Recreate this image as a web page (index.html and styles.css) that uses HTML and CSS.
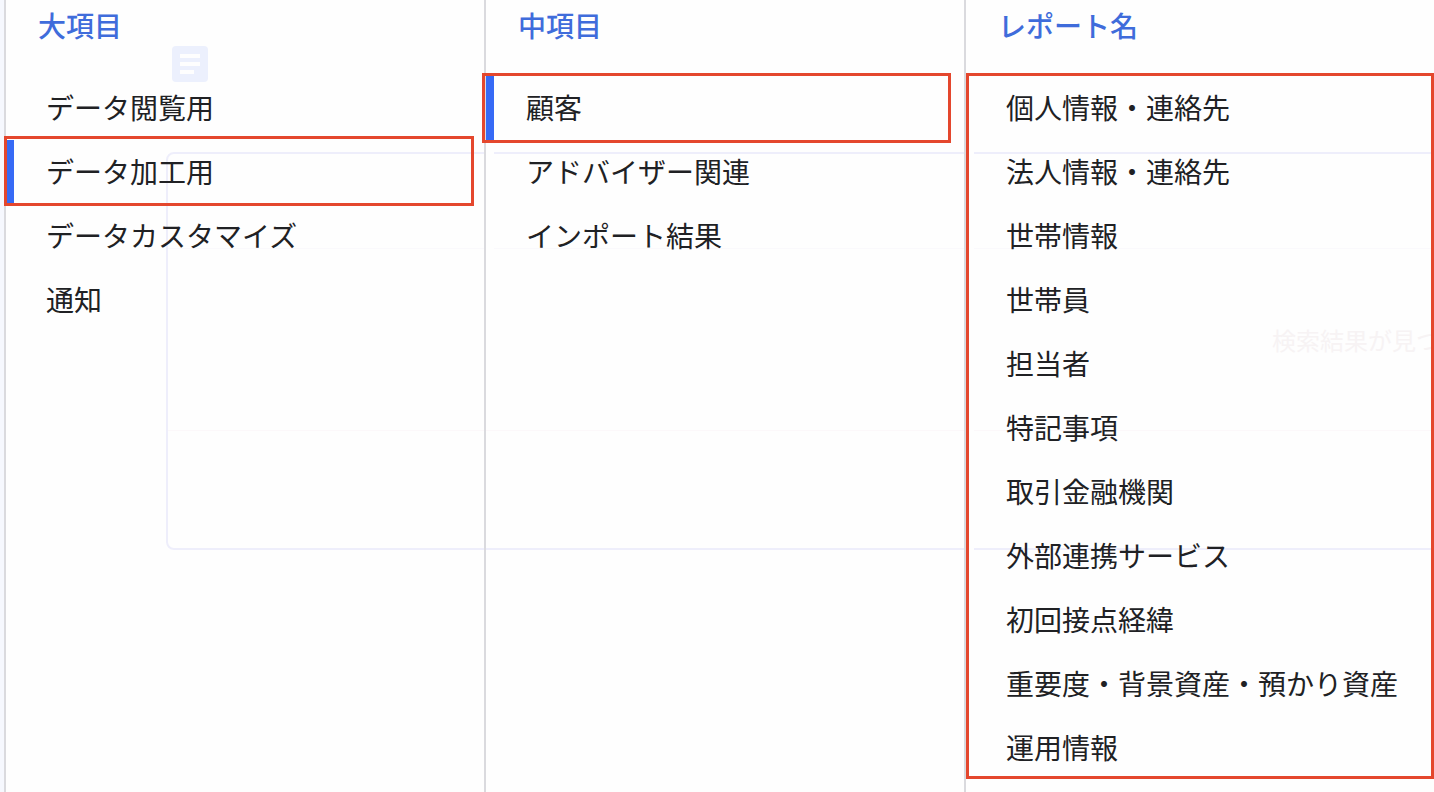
FILE: index.html
```html
<!DOCTYPE html>
<html lang="ja">
<head>
<meta charset="utf-8">
<meta name="viewport" content="width=device-width, initial-scale=1">
<title>レポート選択</title>
<link rel="stylesheet" href="styles.css">
</head>
<body>
<div class="screen">
  <div class="backdrop" aria-hidden="true">
    <svg class="backdrop-icon" viewBox="0 0 36 36">
      <rect width="36" height="36" rx="4" fill="#ecf0fd"/>
      <path d="M8 8h20v4H8zM8 16h20v4H8zM8 24h14v4H8z" fill="#fefefe"/>
    </svg>
    <div class="backdrop-card">
      <div class="backdrop-head"></div>
      <div class="backdrop-body">検索結果が見つ</div>
    </div>
  </div>

  <main class="columns">
    <section class="column">
      <h2 class="column-title">大項目</h2>
      <ul class="list">
        <li class="row"><button class="item" type="button">データ閲覧用</button></li>
        <li class="row"><button class="item item-selected" type="button">データ加工用</button><span class="frame frame-major"></span></li>
        <li class="row"><button class="item" type="button">データカスタマイズ</button></li>
        <li class="row"><button class="item" type="button">通知</button></li>
      </ul>
    </section>
    <section class="column">
      <h2 class="column-title">中項目</h2>
      <ul class="list">
        <li class="row"><button class="item item-selected" type="button">顧客</button><span class="frame frame-middle"></span></li>
        <li class="row"><button class="item" type="button">アドバイザー関連</button></li>
        <li class="row"><button class="item" type="button">インポート結果</button></li>
      </ul>
    </section>
    <section class="column">
      <h2 class="column-title">レポート名</h2>
      <div class="list-wrap">
        <ul class="list">
          <li class="row"><button class="item" type="button">個人情報・連絡先</button></li>
          <li class="row"><button class="item" type="button">法人情報・連絡先</button></li>
          <li class="row"><button class="item" type="button">世帯情報</button></li>
          <li class="row"><button class="item" type="button">世帯員</button></li>
          <li class="row"><button class="item" type="button">担当者</button></li>
          <li class="row"><button class="item" type="button">特記事項</button></li>
          <li class="row"><button class="item" type="button">取引金融機関</button></li>
          <li class="row"><button class="item" type="button">外部連携サービス</button></li>
          <li class="row"><button class="item" type="button">初回接点経緯</button></li>
          <li class="row"><button class="item" type="button">重要度・背景資産・預かり資産</button></li>
          <li class="row"><button class="item" type="button">運用情報</button></li>
        </ul>
        <span class="frame frame-report"></span>
      </div>
    </section>
  </main>
</div>
</body>
</html>
```
FILE: styles.css
```css
* {
  box-sizing: border-box;
}

body {
  margin: 0;
  background: #fefefe;
  color: #202124;
  font-family: "Noto Sans CJK JP", sans-serif;
  font-size: 28px;
  line-height: 40px;
}

.screen {
  position: relative;
  min-height: 100vh;
  overflow: hidden;
  border-left: 4px solid #f6f8fe;
  display: flex;
}

/* Faded page behind the menu */
.backdrop {
  position: absolute;
  top: 46px;
  left: 162px;
  right: -8px;
}

.backdrop-icon {
  display: block;
  width: 36px;
  height: 36px;
  margin: 0 0 70px 6px;
}

.backdrop-card {
  border: 2px solid #eeeefb;
  border-radius: 8px;
}

.backdrop-head {
  height: 95px;
  border-bottom: 1px solid #faf9fc;
}

.backdrop-body {
  display: flex;
  justify-content: flex-end;
  align-items: center;
  height: 182px;
  margin-bottom: 117px;
  border-bottom: 1px solid #fcf8fa;
  color: #f7f3f4;
  font-size: 24px;
}

/* Menu columns */
.columns {
  position: relative;
  flex: 1;
  display: grid;
  grid-template-columns: 480fr 480fr 470fr;
}

.column {
  min-width: 0;
  border-left: 2px solid #dadade;
}

.column-title {
  margin: 0;
  padding: 5px 32px 31px;
  color: #3f6cdb;
  font-size: 28px;
  font-weight: 500;
}

.list {
  margin: 0;
  padding: 0;
  list-style: none;
}

.row,
.list-wrap {
  position: relative;
}

.item {
  display: block;
  width: 100%;
  padding: 11px 0 13px 32px;
  border: 0;
  border-left: 8px solid #fefefe;
  background: none;
  color: inherit;
  font: inherit;
  text-align: left;
  white-space: nowrap;
  cursor: pointer;
}

.item-selected {
  border-left-color: #366af5;
}

/* Red emphasis frames over the menu */
.frame {
  position: absolute;
  z-index: 1;
  border: 3px solid #e4472d;
  pointer-events: none;
}

.frame-major {
  top: -4px;
  bottom: -2px;
  left: -2px;
  right: 10px;
}

.frame-middle {
  top: -3px;
  bottom: -3px;
  left: -4px;
  right: 13px;
}

.frame-report {
  top: -3px;
  bottom: 1px;
  left: 0;
  right: 0;
}
```
